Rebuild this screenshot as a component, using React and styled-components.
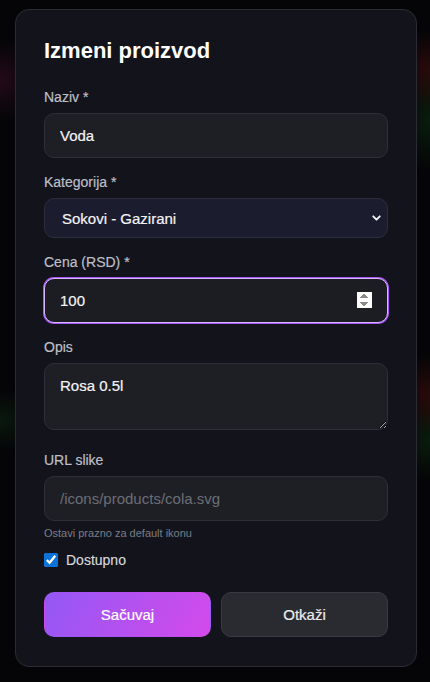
import React, { useState } from 'react';
import styled, { createGlobalStyle } from 'styled-components';
import { ChevronDown } from 'lucide-react';

const GlobalStyle = createGlobalStyle`
  * { box-sizing: border-box; }
  html, body {
    margin: 0;
    padding: 0;
    background: #050507;
  }
  body {
    font-family: 'Liberation Sans', Arial, sans-serif;
    color: #f2f2f5;
  }
`;

const Overlay = styled.div`
  min-height: 682px;
  padding: 9px 13px 16px 15px;
  background:
    radial-gradient(40px 40px at 0px 80px, rgba(90, 20, 60, 0.35), transparent),
    radial-gradient(40px 30px at 0px 420px, rgba(20, 70, 30, 0.3), transparent),
    radial-gradient(40px 40px at 430px 70px, rgba(110, 20, 20, 0.35), transparent),
    radial-gradient(40px 50px at 430px 120px, rgba(20, 80, 30, 0.3), transparent),
    radial-gradient(40px 40px at 430px 395px, rgba(110, 20, 20, 0.35), transparent),
    radial-gradient(40px 40px at 430px 440px, rgba(20, 80, 30, 0.3), transparent),
    #050507;
`;

const Modal = styled.form`
  width: 402px;
  background: #13141b;
  border: 1px solid #2a2b33;
  border-radius: 14px;
  padding: 28px 28px 29px;
`;

const Title = styled.h2`
  margin: 0 0 25px;
  font-size: 22px;
  line-height: 26px;
  font-weight: 700;
  color: #ffffff;
`;

const Field = styled.div`
  margin-bottom: ${p => p.$gap ?? 16}px;
`;

const Label = styled.label`
  display: block;
  font-size: 14px;
  line-height: 17px;
  color: #bebfc7;
  margin-bottom: 7px;
  -webkit-text-stroke: 0.2px currentColor;
`;

const Input = styled.input`
  display: block;
  width: 100%;
  height: 45px;
  padding: 0 15px;
  background: #1e1f25;
  border: 1px solid #2e2f37;
  border-radius: 10px;
  font-family: inherit;
  font-size: 15px;
  color: #f4f4f6;
  outline: none;
  -webkit-text-stroke: 0.2px currentColor;

  &::placeholder {
    color: #6c6e77;
    -webkit-text-stroke: 0;
  }

  &:focus {
    border-color: #d6b8ff;
    box-shadow: 0 0 0 1px #a855f7;
    background: #1c1d22;
  }
`;

const SelectWrap = styled.div`
  position: relative;
  color: #f4f4f6;

  svg {
    position: absolute;
    right: 5px;
    top: 50%;
    transform: translateY(-50%);
    pointer-events: none;
  }
`;

const Select = styled.select`
  display: block;
  width: 100%;
  height: 40px;
  padding: 0 30px 0 17px;
  appearance: none;
  background: #1c1c2f;
  border: 1px solid #2c2d3d;
  border-radius: 10px;
  font-family: inherit;
  font-size: 15px;
  color: #f4f4f6;
  color-scheme: dark;
  outline: none;
  -webkit-text-stroke: 0.2px currentColor;
`;

const TextArea = styled.textarea`
  display: block;
  width: 100%;
  height: 67px;
  padding: 13px 15px;
  background: #1e1f25;
  border: 1px solid #2e2f37;
  border-radius: 10px;
  font-family: inherit;
  font-size: 15px;
  line-height: 18px;
  color: #f4f4f6;
  outline: none;
  resize: vertical;
  -webkit-text-stroke: 0.2px currentColor;
`;

const Hint = styled.small`
  display: block;
  margin-top: 6px;
  font-size: 11px;
  line-height: 13px;
  color: #7b7d86;
`;

const CheckRow = styled.label`
  display: flex;
  align-items: center;
  gap: 8px;
  font-size: 14px;
  color: #d9d9de;
  margin-bottom: 24px;
  -webkit-text-stroke: 0.15px currentColor;

  input {
    margin: 0;
    width: 14px;
    height: 14px;
    accent-color: #0b72d9;
  }
`;

const Actions = styled.div`
  display: grid;
  grid-template-columns: 1fr 1fr;
  gap: 10px;
`;

const Button = styled.button`
  height: 45px;
  border-radius: 10px;
  font-family: inherit;
  font-size: 15px;
  font-weight: 500;
  cursor: pointer;
  -webkit-text-stroke: 0.2px currentColor;
  color: ${p => (p.$primary ? '#ffffff' : '#ececef')};
  background: ${p => (p.$primary ? 'linear-gradient(120deg, #9358f5 0%, #d44aea 100%)' : '#2a2b31')};
  border: 1px solid ${p => (p.$primary ? 'transparent' : '#393a42')};
`;

export default function App() {
  const [name, setName] = useState('Voda');
  const [category, setCategory] = useState('gazirani');
  const [price, setPrice] = useState('100');
  const [desc, setDesc] = useState('Rosa 0.5l');
  const [image, setImage] = useState('');
  const [available, setAvailable] = useState(true);

  return (
    <>
      <GlobalStyle />
      <Overlay>
        <Modal onSubmit={e => e.preventDefault()}>
          <Title>Izmeni proizvod</Title>

          <Field>
            <Label>Naziv *</Label>
            <Input value={name} onChange={e => setName(e.target.value)} />
          </Field>

          <Field>
            <Label>Kategorija *</Label>
            <SelectWrap>
              <Select value={category} onChange={e => setCategory(e.target.value)}>
                <option value="gazirani">Sokovi - Gazirani</option>
                <option value="negazirani">Sokovi - Negazirani</option>
                <option value="voda">Voda</option>
              </Select>
              <ChevronDown size={13} strokeWidth={3.5} />
            </SelectWrap>
          </Field>

          <Field>
            <Label>Cena (RSD) *</Label>
            <Input type="number" autoFocus value={price} onChange={e => setPrice(e.target.value)} />
          </Field>

          <Field $gap={22}>
            <Label>Opis</Label>
            <TextArea value={desc} onChange={e => setDesc(e.target.value)} />
          </Field>

          <Field $gap={12}>
            <Label>URL slike</Label>
            <Input
              placeholder="/icons/products/cola.svg"
              value={image}
              onChange={e => setImage(e.target.value)}
            />
            <Hint>Ostavi prazno za default ikonu</Hint>
          </Field>

          <CheckRow>
            <input type="checkbox" checked={available} onChange={e => setAvailable(e.target.checked)} />
            Dostupno
          </CheckRow>

          <Actions>
            <Button type="submit" $primary>Sačuvaj</Button>
            <Button type="button">Otkaži</Button>
          </Actions>
        </Modal>
      </Overlay>
    </>
  );
}
